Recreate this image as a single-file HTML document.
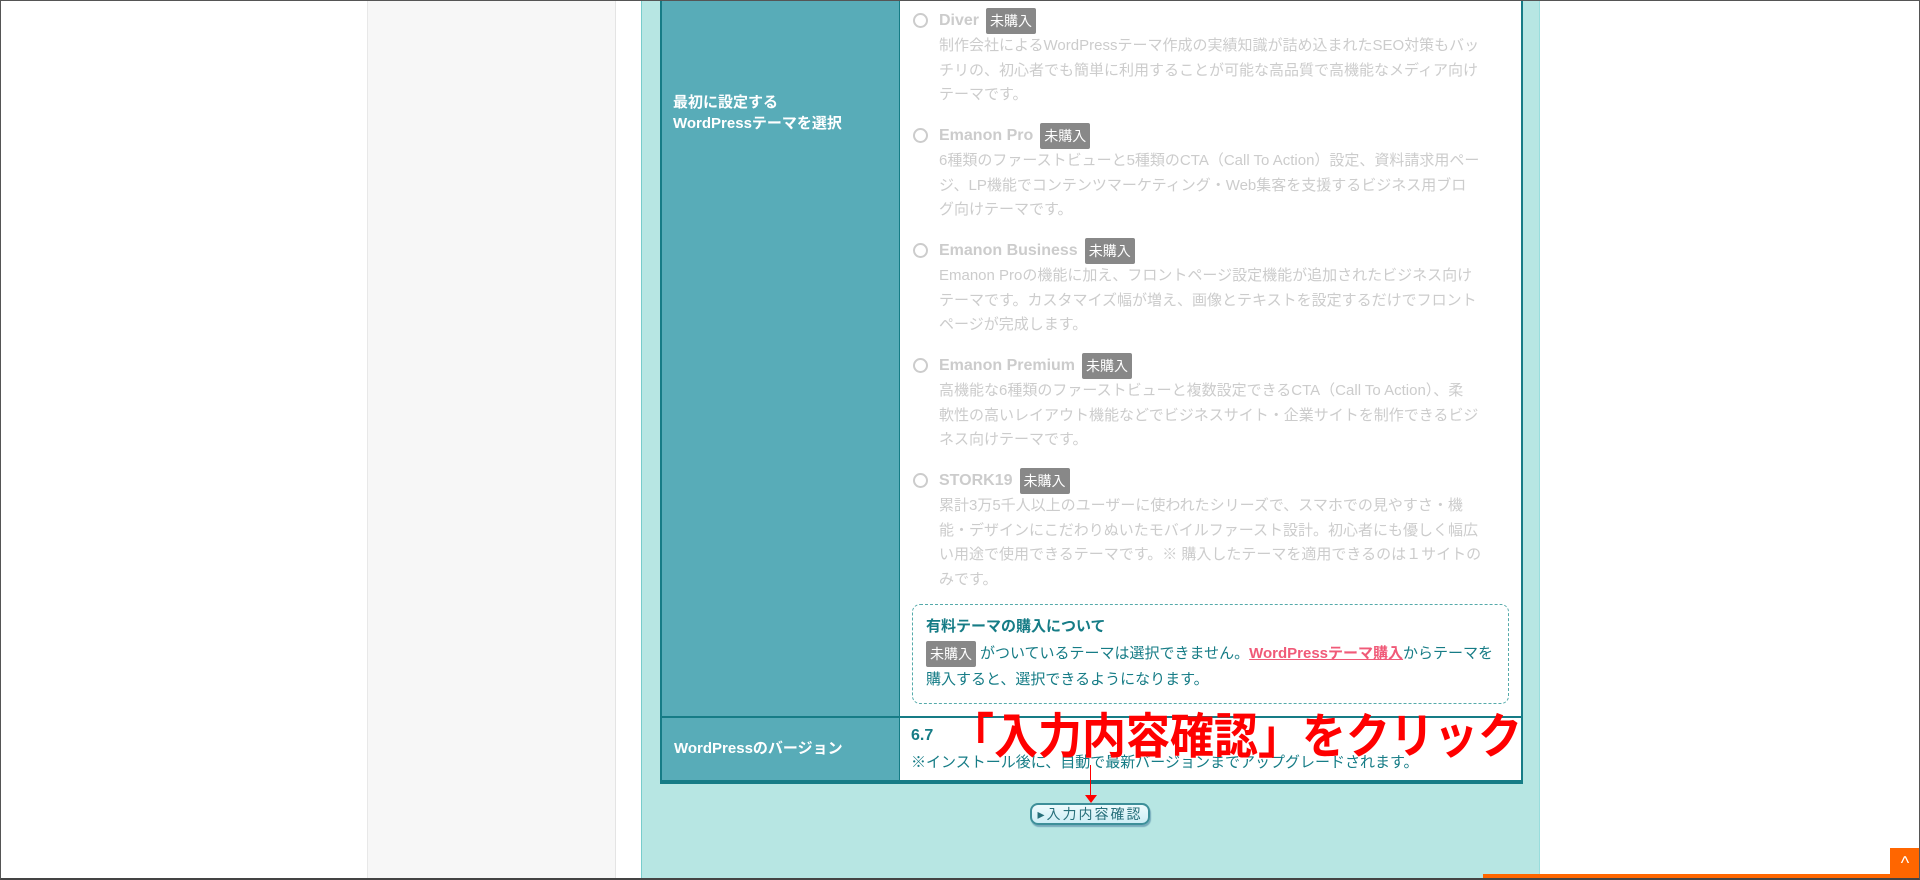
<!DOCTYPE html>
<html><head><meta charset="utf-8"><style>
*{margin:0;padding:0;box-sizing:border-box}
body{width:1920px;height:880px;position:relative;overflow:hidden;background:#fff;font-family:"Liberation Sans","Noto Sans CJK JP",sans-serif}
.a{position:absolute}
.frame{left:0;top:0;width:1920px;height:880px;border:1px solid #555;border-bottom:2px solid #444;z-index:10;pointer-events:none}
.side{left:367px;top:0;width:249px;height:880px;background:#f7f7f7;border-left:1px solid #e8e8e8;border-right:1px solid #e4e4e4}
.main{left:641px;top:0;width:899px;height:880px;background:#b7e6e3;border-left:1px solid #7cc;border-right:1px solid #9dd}
.th{background:#58acb8;color:#fff;font-weight:bold;font-size:15px;line-height:21px}
.t{font-size:15px;color:#ccc;line-height:24.5px;width:546px}
.tt{font-size:16px;font-weight:bold;color:#ccc;line-height:22px}
.b{display:inline-block;background:#888;color:#fff;font-size:14px;font-weight:normal;padding:2px 4px;border-radius:2px;line-height:22px;margin-left:7px;vertical-align:middle}
.r{width:15px;height:15px;border:2px solid #ccc;border-radius:50%}
</style></head><body>
<div class="a side"></div>
<div class="a main"></div>
<div class="a" style="left:660px;top:0;width:863px;height:784px;border:2px solid #167c86;border-top:none;border-bottom:4px solid #167c86;background:#fff"></div>
<div class="a th" style="left:662px;top:0;width:238px;height:716px;border-right:1px solid #167c86"></div>
<div class="a" style="left:662px;top:716px;width:859px;height:2px;background:#167c86"></div>
<div class="a th" style="left:662px;top:718px;width:238px;height:62px;border-right:1px solid #167c86"></div>
<div class="a th" style="left:673px;top:92px">最初に設定する<br>WordPressテーマを選択</div>
<div class="a th" style="left:674px;top:738px;background:none">WordPressのバージョン</div>

<div class="a r" style="left:913px;top:13px"></div>
<div class="a tt" style="left:939px;top:8px">Diver<span class="b">未購入</span></div>
<div class="a t" style="left:939px;top:34px">制作会社によるWordPressテーマ作成の実績知識が詰め込まれたSEO対策もバッチリの、初心者でも簡単に利用することが可能な高品質で高機能なメディア向けテーマです。</div>

<div class="a r" style="left:913px;top:128px"></div>
<div class="a tt" style="left:939px;top:123px">Emanon Pro<span class="b">未購入</span></div>
<div class="a t" style="left:939px;top:149px">6種類のファーストビューと5種類のCTA（Call To Action）設定、資料請求用ページ、LP機能でコンテンツマーケティング・Web集客を支援するビジネス用ブロ<br>グ向けテーマです。</div>

<div class="a r" style="left:913px;top:243px"></div>
<div class="a tt" style="left:939px;top:238px">Emanon Business<span class="b">未購入</span></div>
<div class="a t" style="left:939px;top:264px">Emanon Proの機能に加え、フロントページ設定機能が追加されたビジネス向けテーマです。カスタマイズ幅が増え、画像とテキストを設定するだけでフロントページが完成します。</div>

<div class="a r" style="left:913px;top:358px"></div>
<div class="a tt" style="left:939px;top:353px">Emanon Premium<span class="b">未購入</span></div>
<div class="a t" style="left:939px;top:379px">高機能な6種類のファーストビューと複数設定できるCTA（Call To Action）、柔<br>軟性の高いレイアウト機能などでビジネスサイト・企業サイトを制作できるビジネス向けテーマです。</div>

<div class="a r" style="left:913px;top:473px"></div>
<div class="a tt" style="left:939px;top:468px">STORK19<span class="b">未購入</span></div>
<div class="a t" style="left:939px;top:494px">累計3万5千人以上のユーザーに使われたシリーズで、スマホでの見やすさ・機能・デザインにこだわりぬいたモバイルファースト設計。初心者にも優しく幅広い用途で使用できるテーマです。※ 購入したテーマを適用できるのは１サイトのみです。</div>

<div class="a" style="left:912px;top:604px;width:597px;height:100px;border:1px dashed #5aa;border-radius:8px"></div>
<div class="a" style="left:926px;top:615px;font-size:15px;font-weight:bold;color:#167c86">有料テーマの購入について</div>
<div class="a" style="left:926px;top:641px;width:572px;font-size:15px;line-height:25px;color:#167c86"><span class="b" style="margin:0 4px 0 0">未購入</span>がついているテーマは選択できません。<span style="color:#f05a78;font-weight:bold;text-decoration:underline">WordPressテーマ購入</span>からテーマを購入すると、選択できるようになります。</div>

<div class="a" style="left:911px;top:727px;font-size:16px;font-weight:bold;color:#167c86">6.7</div>
<div class="a" style="left:911px;top:751px;font-size:15px;color:#167c86">※インストール後に、自動で最新バージョンまでアップグレードされます。</div>

<div class="a" style="left:950px;top:708px;font-size:44px;color:#f00;font-weight:bold;white-space:nowrap;line-height:54px;transform:scaleY(1.1);transform-origin:top left">「入力内容確認」をクリック</div>
<div class="a" style="left:1090px;top:765px;width:1px;height:34px;background:#f00"></div>
<div class="a" style="left:1085px;top:795px;width:0;height:0;border-left:6px solid transparent;border-right:6px solid transparent;border-top:8px solid #f00"></div>

<div class="a" style="left:1030px;top:803px;width:120px;height:22px;border:2px solid #3d8f99;border-radius:8px;background:linear-gradient(#eefbfd,#cdeef5);font-size:14px;letter-spacing:2px;color:#276f7a;line-height:18px;text-align:center;box-shadow:1px 2px 1px #7ab">▸入力内容確認</div>

<div class="a" style="left:1483px;top:874px;width:407px;height:6px;background:#f60"></div>
<div class="a" style="left:1890px;top:848px;width:30px;height:32px;background:#f60;color:#fff;font-size:18px;text-align:center;line-height:30px">^</div>
<div class="a frame"></div>
</body></html>
